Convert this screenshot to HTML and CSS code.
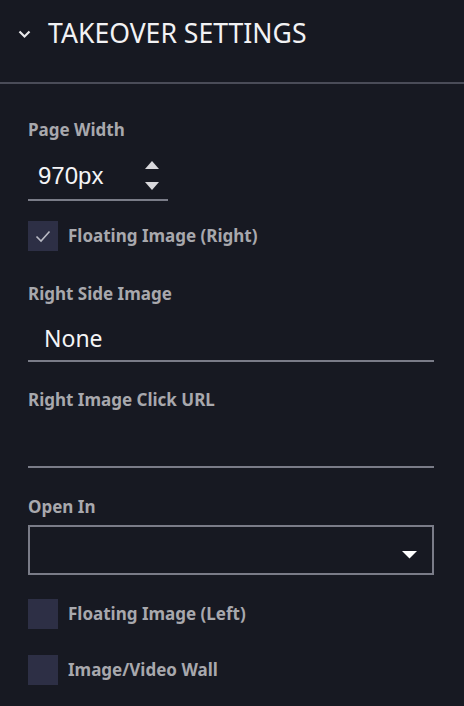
FILE: index.html
```html
<!DOCTYPE html>
<html>
<head>
<meta charset="utf-8">
<link rel="stylesheet" href="styles.css">
</head>
<body>
<div class="panel">
  <div class="header">
    <svg class="chev" width="13" height="9" viewBox="0 0 13 9"><path d="M1.5 1.5 L6.5 6.5 L11.5 1.5" fill="none" stroke="#e8e8ea" stroke-width="2.2"/></svg>
    <span class="title">TAKEOVER SETTINGS</span>
  </div>
  <div class="body">
    <div class="label">Page Width</div>
    <div class="num">
      <span class="num-val">970px</span>
      <span class="spin">
        <svg width="14" height="29" viewBox="0 0 14 29"><polygon points="7,0 14,8 0,8" fill="#d8d8dc"/><polygon points="0,21 14,21 7,29" fill="#d8d8dc"/></svg>
      </span>
    </div>
    <div class="check first">
      <span class="box"><svg width="30" height="30" viewBox="0 0 30 30"><path d="M8.5 15.5 L13 20 L21.5 10.5" fill="none" stroke="#b9bac4" stroke-width="1.6"/></svg></span>
      <span class="check-label">Floating Image (Right)</span>
    </div>
    <div class="label after-check">Right Side Image</div>
    <div class="field"><span class="field-val">None</span></div>
    <div class="label after-field">Right Image Click URL</div>
    <div class="field"><span class="field-val"></span></div>
    <div class="label after-field2">Open In</div>
    <div class="select">
      <svg width="15" height="8" viewBox="0 0 15 8"><polygon points="0,0 15,0 7.5,7.5" fill="#ffffff"/></svg>
    </div>
    <div class="check after-select">
      <span class="box"></span>
      <span class="check-label">Floating Image (Left)</span>
    </div>
    <div class="check next">
      <span class="box"></span>
      <span class="check-label">Image/Video Wall</span>
    </div>
  </div>
</div>
</body>
</html>
```
FILE: styles.css
```css
html, body {
  margin: 0;
  padding: 0;
  background: #171922;
}
body {
  font-family: "Noto Sans", sans-serif;
  width: 464px;
  height: 706px;
  overflow: hidden;
}
.header {
  display: flex;
  align-items: center;
  border-bottom: 2px solid #4a4c58;
  box-sizing: border-box;
  height: 84px;
  padding-bottom: 16px;
}
.chev {
  margin-left: 18px;
  margin-right: 17px;
  margin-top: 2px;
}
.title {
  color: #f2f2f4;
  font-size: 26.6px;
  line-height: 34px;
}
.body {
  padding: 35px 30px 0 28px;
}
.label {
  color: #a8a8ad;
  font-size: 17px;
  font-weight: 700;
  line-height: 22px;
}
.num {
  margin-top: 5px;
  width: 140px;
  box-sizing: border-box;
  display: flex;
  align-items: center;
  justify-content: space-between;
  padding: 15px 9px 9px 10px;
  border-bottom: 2px solid #7a7c88;
}
.num-val {
  font-family: "Liberation Sans", Arial, sans-serif;
  color: #f4f4f6;
  font-size: 24px;
  line-height: 28px;
}
.spin {
  display: flex;
}
.spin svg { display: block; }
.check {
  display: flex;
  align-items: center;
}
.check.first { margin-top: 20px; }
.check.after-select { margin-top: 24px; }
.check.next { margin-top: 26px; }
.box {
  width: 30px;
  height: 30px;
  background: #2d2f45;
  flex: none;
}
.box svg { display: block; }
.check-label {
  margin-left: 10px;
  color: #a8a8ad;
  font-size: 17px;
  font-weight: 700;
  line-height: 22px;
}
.label.after-check { margin-top: 32px; }
.label.after-field { margin-top: 27px; }
.label.after-field2 { margin-top: 28px; }
.field {
  height: 57px;
  box-sizing: border-box;
  padding: 17px 16px 6px;
  border-bottom: 2px solid #7a7c88;
}
.field-val {
  display: block;
  color: #f4f4f6;
  font-size: 23px;
  line-height: 32px;
  height: 32px;
}
.select {
  margin-top: 7px;
  height: 50px;
  box-sizing: border-box;
  border: 2px solid #7a7c88;
  display: flex;
  align-items: center;
  justify-content: flex-end;
  padding-right: 15px;
  padding-top: 10px;
}
.select svg { display: block; }
```
